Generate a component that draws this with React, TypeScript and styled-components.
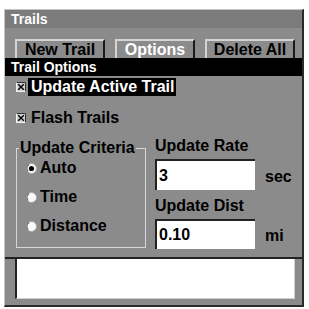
import React from 'react';
import styled, { createGlobalStyle } from 'styled-components';

const Global = createGlobalStyle`
  html, body { margin: 0; padding: 0; background: #fff; }
  body { font-family: "Liberation Sans", Arial, sans-serif; }
  * { box-sizing: border-box; }
`;

const Panel = styled.div`
  margin: 9px 0 0 4px;
  width: 300px;
  height: 298px;
  background: #8b8b8b;
  border-top: 1px solid #c4c4c4;
  border-left: 1px solid #c4c4c4;
  border-right: 2px solid #2a2a2a;
  border-bottom: 2px solid #2a2a2a;
  display: flex;
  flex-direction: column;
  font-weight: bold;
  color: #000;
`;

const TitleBar = styled.div`
  height: 18px;
  background: #7b7b7b;
  color: #fff;
  font-size: 14px;
  line-height: 18px;
  padding-left: 6px;
`;

const TabRow = styled.div`
  height: 30px;
  display: flex;
  align-items: flex-end;
  gap: 10px;
  padding-left: 10px;
`;

const Tab = styled.div<{ $w: number; $active?: boolean }>`
  width: ${p => p.$w}px;
  height: 19px;
  border-top: 2px solid #d4d4d4;
  border-left: 2px solid #d4d4d4;
  border-right: 2px solid #1a1a1a;
  font-size: 16px;
  line-height: 17px;
  text-align: center;
  color: ${p => (p.$active ? '#fff' : '#000')};
`;

const SectionBar = styled.div`
  height: 18px;
  background: #000;
  color: #fff;
  font-size: 14px;
  line-height: 18px;
  padding-left: 6px;
`;

const OptionRow = styled.div<{ $mt: number }>`
  height: 18px;
  margin-top: ${p => p.$mt}px;
  display: flex;
  align-items: center;
  padding-left: 11px;
`;

const OptionLabel = styled.span<{ $hl?: boolean }>`
  margin-left: 2px;
  padding: 0 2px 0 3px;
  font-size: 16px;
  line-height: 18px;
  background: ${p => (p.$hl ? '#000' : 'transparent')};
  color: ${p => (p.$hl ? '#fff' : '#000')};
`;

const CriteriaArea = styled.div`
  height: 130px;
  display: flex;
  align-items: flex-start;
  gap: 9px;
  padding: 10px 0 0 11px;
`;

const Group = styled.fieldset`
  width: 130px;
  min-width: 0;
  margin: 2px 0 0 0;
  padding: 2px 0 12px 0;
  border: 1px solid #d6d6d6;
`;

const GroupLegend = styled.legend`
  margin-left: 2px;
  padding: 0 1px;
  font-size: 16px;
  line-height: 18px;
`;

const RadioList = styled.div`
  display: flex;
  flex-direction: column;
  gap: 11px;
  padding-left: 9px;
`;

const RadioRow = styled.div`
  height: 18px;
  display: flex;
  align-items: center;
  gap: 3px;
  font-size: 16px;
  line-height: 18px;
`;

const FieldColumn = styled.div`
  display: flex;
  flex-direction: column;
`;

const FieldLabel = styled.div<{ $mt: number }>`
  margin-top: ${p => p.$mt}px;
  font-size: 16px;
  line-height: 18px;
`;

const InputRow = styled.div<{ $h: number }>`
  margin-top: 4px;
  height: ${p => p.$h}px;
  display: flex;
  align-items: center;
  gap: 10px;
`;

const ValueBox = styled.div`
  width: 100px;
  height: 100%;
  background: #fff;
  border-top: 2px solid #222;
  border-left: 2px solid #222;
  padding-left: 2px;
  font-size: 16px;
  line-height: 26px;
  display: flex;
  align-items: center;
`;

const Unit = styled.span`
  font-size: 16px;
  line-height: 18px;
  padding-top: 4px;
`;

const Footer = styled.div`
  flex: 1;
  border-top: 2px solid #222;
  padding-left: 10px;
`;

const MessageBox = styled.div`
  width: 280px;
  height: 40px;
  background: #fff;
  border-left: 2px solid #222;
  border-right: 1px solid #cfcfcf;
  border-bottom: 1px solid #cfcfcf;
`;

const CheckIcon = () => (
  <svg width="10" height="10" viewBox="0 0 10 10">
    <rect x="0.5" y="0.5" width="9" height="9" fill="#cfcfcf" stroke="#f2f2f2" />
    <path d="M0.5 0.5 H9.5 V9.5" fill="none" stroke="#333" />
    <path d="M2.2 2.2 L7.8 7.8 M7.8 2.2 L2.2 7.8" stroke="#000" strokeWidth="1.4" />
  </svg>
);

const RadioIcon = ({ checked }: { checked?: boolean }) => (
  <svg width="11" height="11" viewBox="0 0 11 11">
    <circle cx="5.5" cy="5.5" r="5" fill="#fafafa" stroke="#a8a8a8" />
    <path d="M2 8.5 A5 5 0 0 1 3 1.6" fill="none" stroke="#6a6a6a" strokeWidth="1.2" />
    {checked && <circle cx="5.5" cy="5.5" r="2.6" fill="#000" />}
  </svg>
);

export default function App() {
  return (
    <>
      <Global />
      <Panel>
        <TitleBar>Trails</TitleBar>
        <TabRow>
          <Tab $w={90}>New Trail</Tab>
          <Tab $w={80} $active>Options</Tab>
          <Tab $w={90}>Delete All</Tab>
        </TabRow>
        <SectionBar>Trail Options</SectionBar>
        <OptionRow $mt={2}>
          <CheckIcon />
          <OptionLabel $hl>Update Active Trail</OptionLabel>
        </OptionRow>
        <OptionRow $mt={13}>
          <CheckIcon />
          <OptionLabel>Flash Trails</OptionLabel>
        </OptionRow>
        <CriteriaArea>
          <Group>
            <GroupLegend>Update Criteria</GroupLegend>
            <RadioList>
              <RadioRow><RadioIcon checked />Auto</RadioRow>
              <RadioRow><RadioIcon />Time</RadioRow>
              <RadioRow><RadioIcon />Distance</RadioRow>
            </RadioList>
          </Group>
          <FieldColumn>
            <FieldLabel $mt={0}>Update Rate</FieldLabel>
            <InputRow $h={31}>
              <ValueBox>3</ValueBox>
              <Unit>sec</Unit>
            </InputRow>
            <FieldLabel $mt={7}>Update Dist</FieldLabel>
            <InputRow $h={30}>
              <ValueBox>0.10</ValueBox>
              <Unit>mi</Unit>
            </InputRow>
          </FieldColumn>
        </CriteriaArea>
        <Footer>
          <MessageBox />
        </Footer>
      </Panel>
    </>
  );
}
